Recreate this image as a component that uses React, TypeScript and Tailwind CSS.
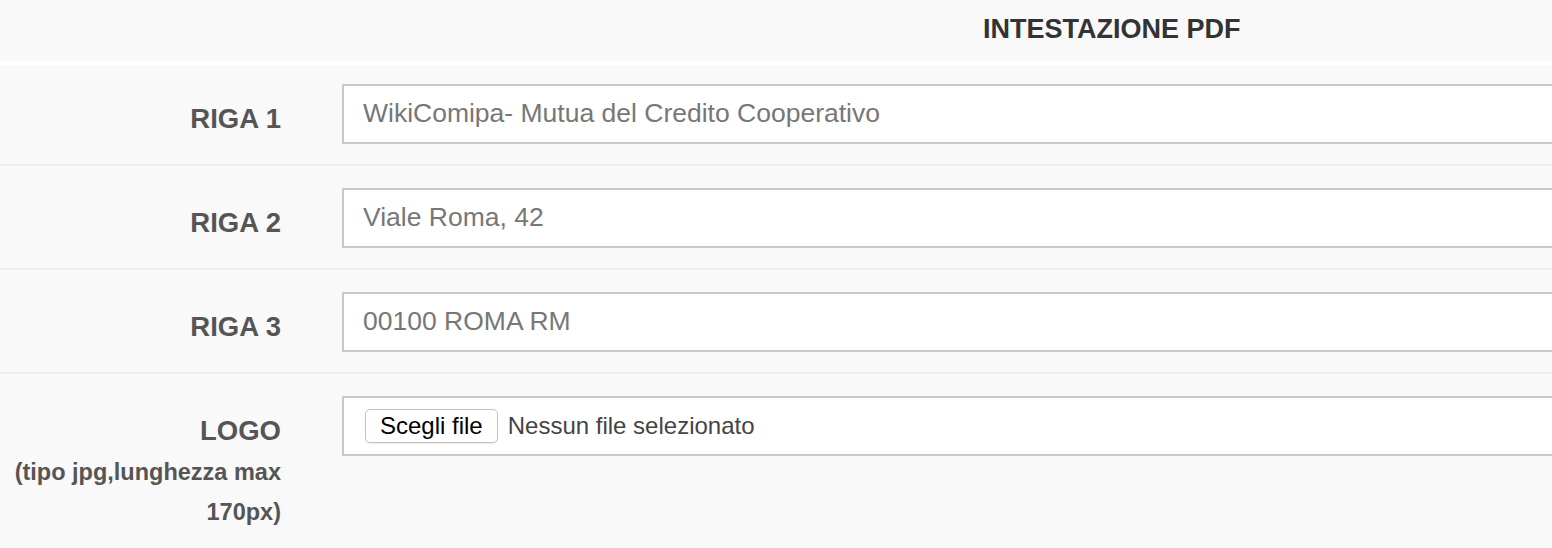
import React from 'react';

interface Riga {
  label: string;
  value: string;
}

const righe: Riga[] = [
  { label: 'RIGA 1', value: 'WikiComipa- Mutua del Credito Cooperativo' },
  { label: 'RIGA 2', value: 'Viale Roma, 42' },
  { label: 'RIGA 3', value: '00100 ROMA RM' },
];

const font = { fontFamily: '"Liberation Sans", Arial, Helvetica, sans-serif' };

const App: React.FC = () => {
  return (
    <div className="w-full min-h-[548px] bg-[#f9f9f9] overflow-hidden" style={font}>
      {/* Header */}
      <div className="h-[64px] border-b-[3px] border-white pl-[983px]">
        <span className="block text-[27px] leading-[58px] font-bold text-[#333] whitespace-nowrap">
          INTESTAZIONE PDF
        </span>
      </div>

      {righe.map((riga, i) => (
        <div key={riga.label} className={i === 0 ? '' : 'border-t-2 border-[#ebebeb]'}>
          <div className={`flex border-t border-white pb-5 ${i === 0 ? 'pt-[19px]' : 'pt-[21px]'}`}>
            <div className="w-[281px] shrink-0 text-right pt-[16px]">
              <span className="text-[27.5px] leading-[38px] font-bold text-[#555]">{riga.label}</span>
            </div>
            <div className="ml-[61px] w-[1300px] shrink-0 h-[60px] border-2 border-[#c9c9c9] bg-white flex items-center pl-[19px]">
              <span className="text-[26.5px] text-[#777] whitespace-nowrap">{riga.value}</span>
            </div>
          </div>
        </div>
      ))}

      {/* Logo */}
      <div className="border-t-2 border-[#ebebeb]">
        <div className="flex border-t border-white pt-[21px] pb-5">
          <div className="w-[281px] shrink-0 text-right pt-[16px] font-bold text-[#555]">
            <div className="text-[27.5px] leading-[38px]">LOGO</div>
            <div className="mt-[2px] text-[23.5px] leading-[40px] whitespace-nowrap">
              (tipo jpg,lunghezza max
              <br />
              170px)
            </div>
          </div>
          <div className="ml-[61px] w-[1300px] shrink-0 h-[60px] border-2 border-[#c9c9c9] bg-white flex items-center pl-[21px]">
            <span className="h-[34px] px-[14px] flex items-center rounded-[5px] border border-[#c4c4c4] bg-white text-[24px] text-black shadow-[0_1px_1px_rgba(0,0,0,0.08)] whitespace-nowrap">
              Scegli file
            </span>
            <span className="ml-[10px] text-[24px] text-[#444] whitespace-nowrap">Nessun file selezionato</span>
          </div>
        </div>
      </div>
    </div>
  );
};

export default App;
